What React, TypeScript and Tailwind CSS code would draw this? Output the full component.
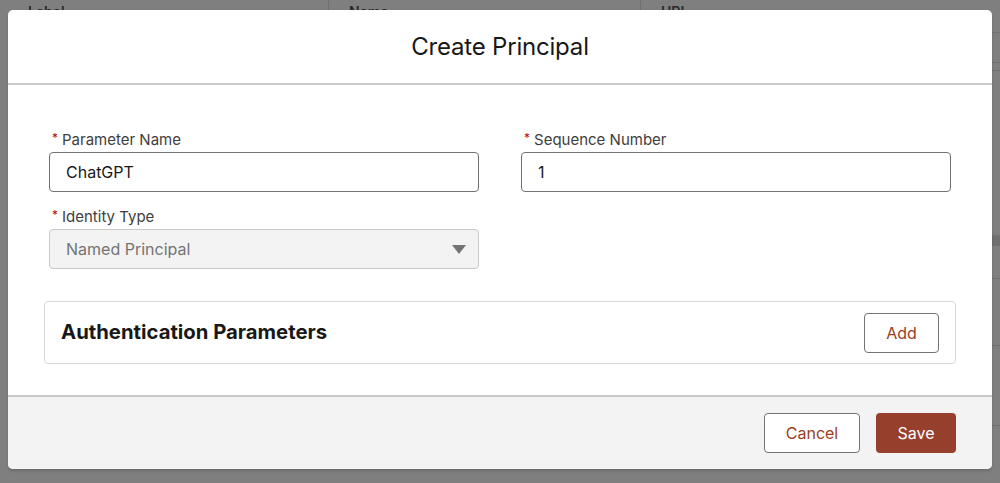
import { ChevronDown } from 'lucide-react';

const font = { fontFamily: 'Inter, "Noto Sans", "Liberation Sans", sans-serif' };

function Label({ text }: { text: string }) {
  return (
    <label className="flex items-start text-[15px] leading-[18px] text-[#3e3e3c] mb-[3px]">
      <span className="text-[#ba0517] text-[12px] leading-[14px] mr-[4px] ml-[3px]">*</span>
      {text}
    </label>
  );
}

function TextField({ label, value }: { label: string; value: string }) {
  return (
    <div className="flex flex-col">
      <Label text={label} />
      <div className="h-[40px] rounded-[4px] border border-[#747474] bg-white flex items-center px-[16px] text-[16px] text-[#181818]">
        {value}
      </div>
    </div>
  );
}

function BackgroundTable() {
  const cols = [
    { name: 'Label', w: 'w-[321px]' },
    { name: 'Name', w: 'w-[312px]' },
    { name: 'URL', w: 'flex-1' },
  ];
  const rows = [30, 8, 165, 10, 33, 67, 80, 10];
  return (
    <div className="absolute inset-0 bg-[#7f7f7f]">
      <div className="flex h-[32px] pl-[8px]">
        {cols.map((c, i) => (
          <div
            key={c.name}
            className={`${c.w} flex items-start justify-between pt-[1px] pl-[20px] pr-[16px] ${i < 2 ? 'border-r border-[#6f6f6f]' : ''}`}
          >
            <span className="text-[14px] font-semibold text-[#2a2a2a]">{c.name}</span>
            {i < 2 && <ChevronDown className="w-4 h-4 mt-[4px] text-[#3a3a3a]" />}
          </div>
        ))}
      </div>
      {/* rows peeking out on the right of the modal */}
      <div className="flex">
        <div className="w-[960px]" />
        <div className="flex-1 flex flex-col">
          {rows.map((h, r) => (
            <div
              key={r}
              style={{ height: h }}
              className={`border-t border-[#727272] ${r === 2 ? 'bg-[#7f7f7f]' : ''} ${r === 3 ? 'bg-[#707070]' : ''}`}
            />
          ))}
        </div>
      </div>
    </div>
  );
}

export default function App() {
  return (
    <div className="relative w-[1000px] h-[483px] overflow-hidden" style={font}>
      <BackgroundTable />

      <div className="absolute left-[8px] top-[10px] w-[984px] h-[459px] rounded-[5px] bg-white flex flex-col overflow-hidden shadow-[0_2px_3px_rgba(0,0,0,0.16)]">
        {/* Header */}
        <div className="h-[75px] shrink-0 border-b-2 border-[#c9c9c9] flex items-center justify-center">
          <h2 className="text-[24px] leading-[28px] text-[#181818] tracking-[-0.2px]">Create Principal</h2>
        </div>

        {/* Body */}
        <div className="flex-1 px-[36px] pt-[46px]">
          <div className="px-[5px] grid grid-cols-2 gap-x-[42px] gap-y-[16px]">
            <TextField label="Parameter Name" value="ChatGPT" />
            <TextField label="Sequence Number" value="1" />
            <div className="flex flex-col">
              <Label text="Identity Type" />
              <div className="h-[40px] rounded-[4px] border border-[#c9c9c9] bg-[#f3f3f3] flex items-center justify-between pl-[16px] pr-[12px] text-[16px] text-[#747474]">
                Named Principal
                <svg width="14" height="9" viewBox="0 0 14 9">
                  <path d="M0 0 L14 0 L7 9 Z" fill="#747474" />
                </svg>
              </div>
            </div>
          </div>

          <div className="mt-[32px] h-[63px] rounded-[4px] border border-[#d8d8d8] flex items-center justify-between pl-[16px] pr-[16px]">
            <h3 className="text-[20.3px] font-bold text-[#181818]">Authentication Parameters</h3>
            <button className="h-[40px] w-[75px] rounded-[4px] border border-[#747474] bg-white text-[16px] text-[#9b3d22]">
              Add
            </button>
          </div>
        </div>

        {/* Footer */}
        <div className="h-[74px] shrink-0 border-t-2 border-[#c9c9c9] bg-[#f3f3f3] flex items-center justify-end gap-[16px] pr-[36px]">
          <button className="h-[40px] w-[96px] rounded-[4px] border border-[#747474] bg-white text-[16px] text-[#9b3d22]">
            Cancel
          </button>
          <button className="h-[40px] w-[80px] rounded-[4px] bg-[#973f2d] text-[16px] text-white">
            Save
          </button>
        </div>
      </div>
    </div>
  );
}
